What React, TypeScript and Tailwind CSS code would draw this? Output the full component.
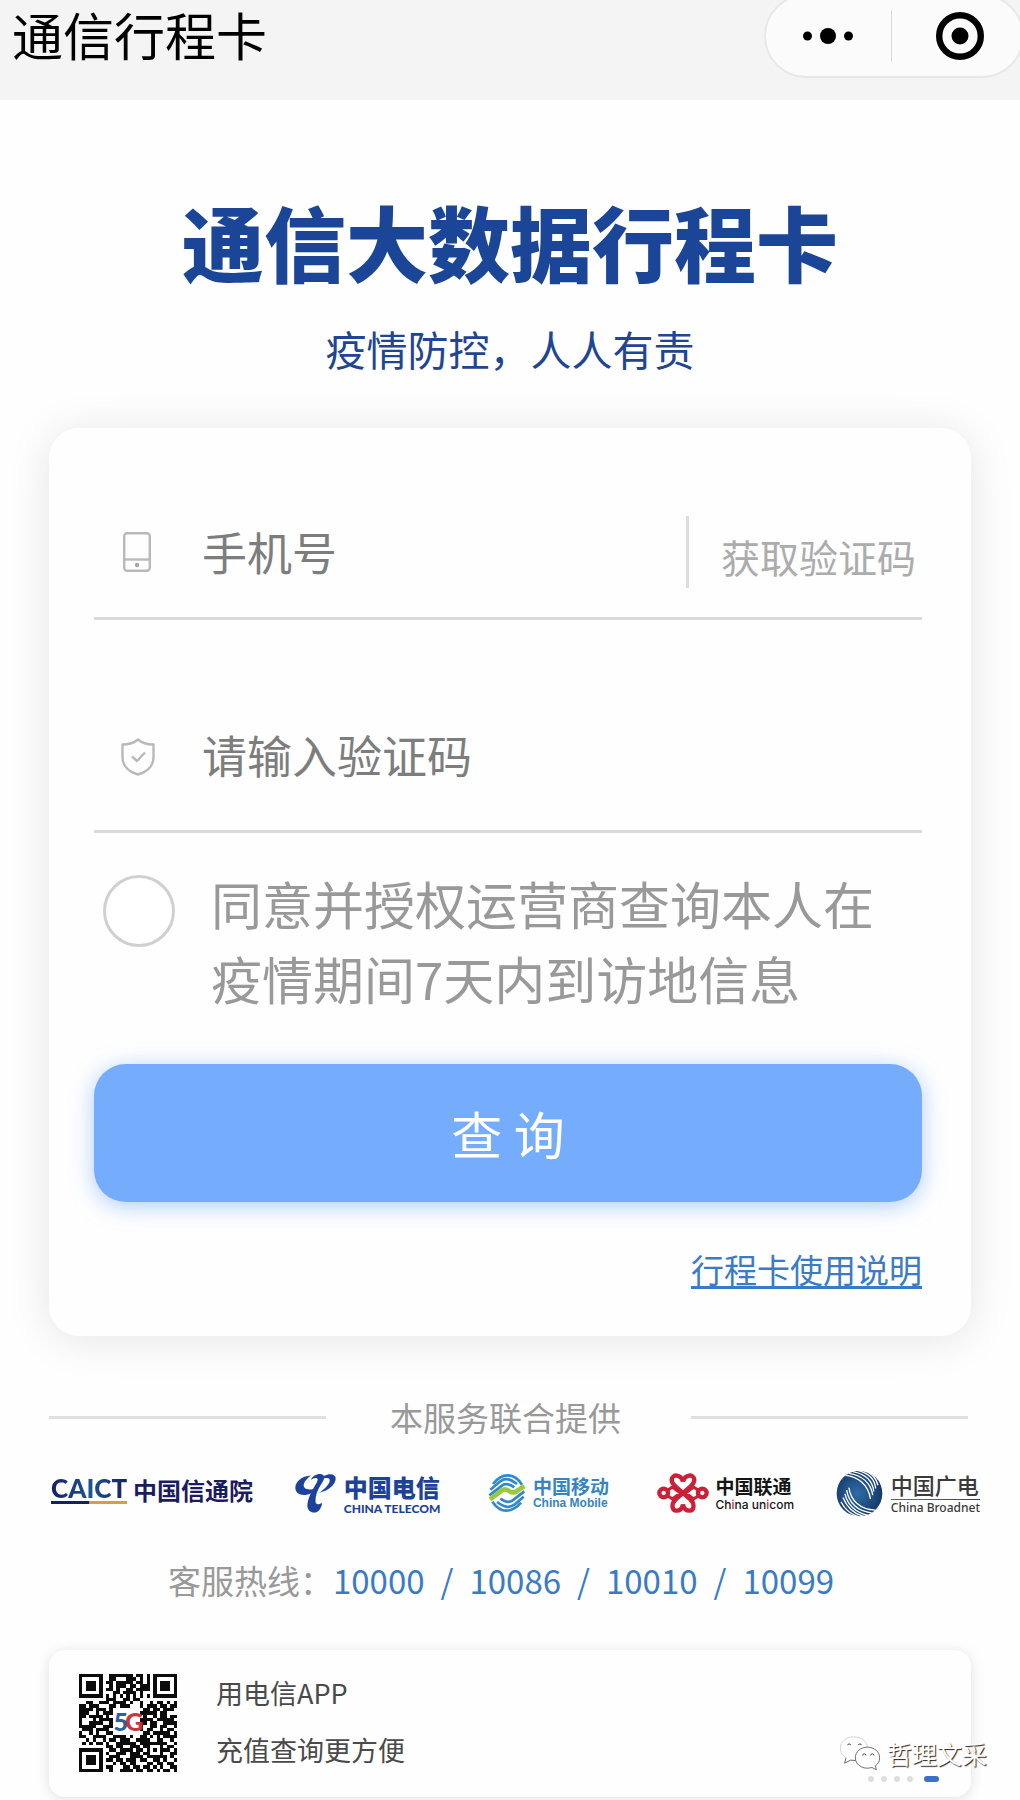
import { useState } from 'react';

const QR_ROWS = [
    '11111110011111110110101111111',
    '10000010011000111010101000001',
    '10111010110111110110101011101',
    '10111010010111011011101011101',
    '10111010110100110111101011101',
    '10000010001101111010001000001',
    '11111110101010101010101111111',
    '00000000111001101100000000000',
    '00110011101111010010010110101',
    '11011100011011100010111011011',
    '11110111010000000001101101110',
    '11100101110000000011111011000',
    '11011110100000000001001011011',
    '10001011110000000011110111110',
    '10011110010000000011011001111',
    '11111001110000000010011011001',
    '01110111100000000010110010110',
    '10010100110000000001101111101',
    '11001111001111010011010101111',
    '00101001011011100111100110010',
    '01010110100111111011111111001',
    '00000000110110011101100010110',
    '11111110011011110110101011101',
    '10000010100111011101100010011',
    '10111010011100011110111111010',
    '10111010110110111011001101001',
    '10111010001011011000110110110',
    '10000010110001101101101010011',
    '11111110010011110110110101101',
];

const HOTLINES = ['10000', '10086', '10010', '10099'];

const QrCode = () => (
    <svg viewBox="0 0 29 29" className="size-[98px] shrink-0" shapeRendering="crispEdges" role="img" aria-label="电信APP二维码">
        {QR_ROWS.map((row, y) =>
            row.split('').map((cell, x) => (cell === '1' ? <rect key={`${x}-${y}`} x={x} y={y} width="1" height="1" fill="#0b0b0b" /> : null)),
        )}
        <g fontFamily="Lato, sans-serif" fontWeight="900" fontSize="7.500">
            <text x="10.200" y="17" fill="#27629f">5</text>
            <text x="13.600" y="17" fill="#c8343f">G</text>
        </g>
    </svg>
);

const PhoneIcon = () => (
    <svg viewBox="0 0 28 40" className="h-10 w-7" fill="none" stroke="#b9b9b9" strokeWidth="2.400">
        <rect x="1.200" y="1.200" width="25.600" height="37.600" rx="3" />
        <path d="M1 27.500H27" />
        <circle cx="14" cy="33" r="2.200" fill="#a5a5a5" stroke="none" />
    </svg>
);

const ShieldIcon = () => (
    <svg viewBox="0 0 34 38" className="h-[38px] w-[34px]" fill="none" stroke="#b9b9b9" strokeWidth="2.400" strokeLinejoin="round">
        <path d="M17 1.500C13 5 7 6.500 1.500 6.500V19C1.500 28 8 34 17 36.500C26 34 32.500 28 32.500 19V6.500C27 6.500 21 5 17 1.500Z" />
        <path d="M11 18.500L16 23L24 14.500" />
    </svg>
);

const TelecomMark = () => (
    <svg viewBox="0 0 124 120" className="h-10 w-[41px]">
        <g fill="#1d429a">
            <path d="M48 7C20 8 0 27 1 45C2 62 17 68 36 65C50 62 60 54 66 43C55 50 38 52 30 45C21 36 29 22 48 7Z" />
            <path d="M48 20C54 8 66 1 80 3C92 5 90 18 80 32C68 50 61 68 62 86C63 95 68 97 82 90C80 106 71 119 59 119C42 119 35 106 38 90C42 67 57 44 66 28C71 19 68 14 62 15C56 16 52 18 48 20Z" />
            <path d="M88 8C104 0 122 2 123 15C124 33 104 53 72 60C89 49 105 33 105 22C105 15 98 13 88 16Z" />
        </g>
    </svg>
);

const MobileMark = () => (
    <svg viewBox="0 0 112 114" className="size-[38px]" fill="none" strokeWidth="8" strokeLinejoin="round">
        <g stroke="#3089cb">
            <path d="M14 30C28 12 44 4 58 4C75 4 90 15 101 32" />
            <path d="M6 47L36 22C52 10 66 16 86 30" />
            <path d="M3 64L42 34C54 26 64 30 78 40" />
            <path d="M108 52L72 80C60 88 50 84 36 74" />
            <path d="M106 68L78 92C60 104 46 98 26 84" />
            <path d="M98 86C84 102 72 110 54 110C40 110 24 100 12 83" />
        </g>
        <path d="M5 76L40 50C48 44 56 46 62 51C70 57 76 58 86 51L108 36" stroke="#9bc93c" strokeWidth="14" />
    </svg>
);

const UnicomMark = () => (
    <svg viewBox="0 0 156 120" className="h-10 w-[52px]" fill="none" stroke="#cc1f38" strokeWidth="13">
        <circle cx="20" cy="60" r="13" />
        <circle cx="136" cy="60" r="13" />
        <path d="M78 26C72 3 46 2 44 20C44 30 49 35 56 41L100 79C114 92 112 113 98 113C87 113 80 106 78 94" />
        <path d="M78 26C84 3 110 2 112 20C112 30 107 35 100 41L56 79C42 92 44 113 58 113C69 113 76 106 78 94" />
        <path d="M32 52L46 42L70 60L46 78L32 68M124 52L110 42L86 60L110 78L124 68" strokeWidth="9" />
    </svg>
);

const BroadnetMark = () => (
    <svg viewBox="0 0 140 142" className="size-[47px]">
        <defs>
            <radialGradient id="globe" cx="0.45" cy="0.5" r="0.6">
                <stop offset="0" stopColor="#2f6da8" />
                <stop offset="1" stopColor="#143464" />
            </radialGradient>
        </defs>
        <circle cx="70" cy="71" r="69" fill="url(#globe)" />
        <g fill="none" stroke="#ffffff" strokeWidth="4">
            <path d="M28 16C64 20 96 42 103 87" />
            <path d="M38 10C76 16 104 38 110 76" />
            <path d="M50 5C86 12 110 32 113 65" />
            <path d="M63 1C94 8 116 26 119 56" />
            <path d="M78 0C102 6 120 22 126 46" />
            <path d="M38 53C43 90 70 120 118 121" />
            <path d="M31 61C38 98 62 124 107 130" />
            <path d="M26 72C34 106 58 128 96 137" />
            <path d="M20 83C32 114 52 132 84 141" />
            <path d="M14 96C26 120 44 134 68 142" />
        </g>
    </svg>
);

const WatermarkIcon = () => (
    <svg viewBox="0 0 120 104" className="h-[35px] w-10" fill="#ffffff" stroke="#555555" strokeWidth="2.500">
        <path d="M41 2C18 2 1 17 1 36C1 48 8 58 18 65L14 81L31 72C36 73 41 74 47 73C66 72 83 55 83 37C83 17 64 2 41 2Z" stroke="#cccccc" />
        <path d="M18 65L14 81L31 72L46 73" />
        <path d="M82 33C61 33 46 47 46 65C46 83 62 96 82 96C87 96 92 95 96 94L109 101L106 89C114 84 119 75 119 65C119 47 103 33 82 33Z" />
        <g fill="none" stroke="#444444" strokeWidth="3">
            <path d="M22 27A6 6 0 0 1 33 27M54 27A6 6 0 0 1 65 27M68 58A5 5 0 0 1 78 58M92 58A5 5 0 0 1 102 58" />
        </g>
    </svg>
);

const Header = () => (
    <header className="flex h-[100px] items-start justify-between overflow-hidden bg-[#f4f4f4] pl-3">
        <span className="text-[51px] leading-[68px] text-black">通信行程卡</span>
        <div className="-mt-1.5 -mr-1 flex h-[84px] w-[260px] shrink-0 items-center rounded-full border-2 border-[#e8e8e8] bg-[#fbfbfb]">
            <button type="button" aria-label="更多" className="flex h-full flex-1 items-center justify-center">
                <svg viewBox="0 0 50 16" className="h-4 w-[50px]">
                    <circle cx="4.500" cy="8" r="4.500" />
                    <circle cx="25" cy="8" r="8" />
                    <circle cx="45.500" cy="8" r="4.500" />
                </svg>
            </button>
            <div className="h-[52px] w-px bg-[#d8d8d8]" />
            <button type="button" aria-label="关闭" className="flex h-full flex-1 items-center justify-center pl-1.5">
                <svg viewBox="0 0 48 48" className="size-12">
                    <circle cx="24" cy="24" r="20.800" fill="none" stroke="#000000" strokeWidth="6.400" />
                    <circle cx="24" cy="24" r="8.500" />
                </svg>
            </button>
        </div>
    </header>
);

const QueryForm = () => {
    const [agreed, setAgreed] = useState(false);

    return (
        <form
            onSubmit={(e) => e.preventDefault()}
            className="mx-[49px] mt-[50px] flex flex-col rounded-[30px] bg-[#fefefe] pt-[58px] pr-[49px] pb-[42px] pl-[45px] shadow-[0_4px_44px_rgba(0,0,0,0.1)]"
        >
            <div className="flex h-[134px] items-center border-b-3 border-[#dadada]">
                <div className="flex w-[108px] shrink-0 justify-center pr-[22px]">
                    <PhoneIcon />
                </div>
                <input
                    type="tel"
                    aria-label="手机号"
                    placeholder="手机号"
                    className="h-[72px] min-w-0 flex-1 text-[45px] outline-none placeholder:text-[#7d7d7d]"
                />
                <div className="h-[72px] w-[3px] bg-[#dcdcdc]" />
                <button type="button" className="pt-2 pr-1.5 pl-8 text-[39px] leading-[60px] text-[#acacac]">
                    获取验证码
                </button>
            </div>

            <div className="mt-16 flex h-[149px] items-center border-b-3 border-[#dadada]">
                <div className="flex w-[108px] shrink-0 justify-center pr-5">
                    <ShieldIcon />
                </div>
                <input
                    type="text"
                    aria-label="验证码"
                    placeholder="请输入验证码"
                    className="mb-1.5 h-[72px] min-w-0 flex-1 text-[45px] outline-none placeholder:text-[#7d7d7d]"
                />
            </div>

            <div className="mt-[33px] flex items-start pl-[9px]">
                <input
                    id="agree"
                    type="checkbox"
                    checked={agreed}
                    onChange={(e) => setAgreed(e.target.checked)}
                    className="mt-[9px] size-[72px] shrink-0 appearance-none rounded-full border-3 border-[#d0d0d0] bg-white checked:border-[#76acfc] checked:bg-[#76acfc]"
                />
                <label htmlFor="agree" className="pr-8 pl-9 text-[51px] leading-[75px] text-[#999999]">
                    同意并授权运营商查询本人在疫情期间7天内到访地信息
                </label>
            </div>

            <button
                type="submit"
                className="mt-12 h-[138px] rounded-[32px] bg-[#76acfc] text-[51px] text-white shadow-[0_4px_22px_rgba(118,172,252,0.6)]"
            >
                查 询
            </button>

            <a href="#guide" className="mt-[42px] self-end text-[33px] leading-[50px] text-[#3a7bc8] underline decoration-3 underline-offset-3">
                行程卡使用说明
            </a>
        </form>
    );
};

const Partners = () => (
    <div className="mt-[26px] flex h-[50px] items-center justify-between pr-10 pl-[51px] leading-none font-bold whitespace-nowrap">
        <div className="flex items-center gap-1.5 pb-1.5 text-[#1b1c5e]">
            <div className="flex flex-col gap-px">
                <span className="bg-linear-to-r from-[#15205f] via-[#1d5596] to-[#15205f] bg-clip-text font-[Lato,sans-serif] text-[26px] leading-6 font-black text-transparent">
                    CAICT
                </span>
                <span className="h-[3px] bg-linear-to-r from-[#15205f] from-50% to-[#dd9b45] to-50%" />
            </div>
            <span className="text-[24px]">中国信通院</span>
        </div>

        <div className="flex items-center gap-2 text-[#1d429a]">
            <TelecomMark />
            <div className="flex flex-col">
                <span className="text-[24px] leading-8 font-black">中国电信</span>
                <span className="font-[Lato,sans-serif] text-[12px] leading-3 font-black">CHINA TELECOM</span>
            </div>
        </div>

        <div className="ml-1.5 flex items-center gap-[7px] text-[#3585c5]">
            <MobileMark />
            <div className="flex flex-col">
                <span className="text-[19px] leading-5">中国移动</span>
                <span className="font-['Liberation_Sans',sans-serif] text-[12px] leading-[14px]">China Mobile</span>
            </div>
        </div>

        <div className="ml-1.5 flex items-center gap-[7px] text-[#151515]">
            <UnicomMark />
            <div className="flex flex-col">
                <span className="text-[19px] leading-6">中国联通</span>
                <span className="font-[Inter,sans-serif] text-[12px] leading-[14px] font-medium">
                    Ch<span className="text-[#cc1f38]">i</span>na un<span className="text-[#cc1f38]">i</span>com
                </span>
            </div>
        </div>

        <div className="flex items-center gap-2 text-[#3a3a3a]">
            <BroadnetMark />
            <div className="flex flex-col">
                <span className="text-[22px] leading-[26px] font-medium">中国广电</span>
                <span className="mt-0.5 h-px bg-linear-to-r from-[#c8343f] to-[#1c3f78]" />
                <span className="pt-px font-['Noto_Sans',sans-serif] text-[12px] leading-[14px] font-medium">China Broadnet</span>
            </div>
        </div>
    </div>
);

const Promo = () => (
    <section className="relative mx-[49px] mt-[45px] flex items-center rounded-2xl bg-[#fefefe] pt-3.5 pr-8 pb-[15px] pl-[30px] shadow-[0_2px_14px_rgba(0,0,0,0.12)]">
        <QrCode />
        <p className="pb-1 pl-[39px] text-[27px] leading-[57px] text-[#4a4a4a]">
            用电信APP
            <br />
            充值查询更方便
        </p>
        <div className="absolute right-8 bottom-[15px] flex items-center gap-[7px]">
            {[0, 1, 2, 3].map((i) => (
                <span key={i} className="size-1.5 rounded-full bg-[#dedede]" />
            ))}
            <span className="ml-1 h-1.5 w-[15px] rounded-full bg-[#3b70c6]" />
        </div>
        <div className="absolute -right-4 bottom-[26px] flex items-center gap-[7px]">
            <WatermarkIcon />
            <span className="text-[25px] leading-9 text-white [text-shadow:1px_1px_1px_#222222]">哲理文采</span>
        </div>
    </section>
);

export default function App() {
    return (
        <div className="overflow-hidden bg-[#fefefe] pb-[3px] font-['Noto_Sans_CJK_SC',sans-serif]">
            <Header />
            <main>
                <h1 className="mt-[91px] text-center text-[82px] leading-[100px] font-black text-[#1b4596]">通信大数据行程卡</h1>
                <p className="mt-[27px] text-center text-[41px] leading-[60px] text-[#1f4690]">疫情防控，人人有责</p>

                <QueryForm />

                <div className="mr-[52px] ml-[49px] mt-14 flex items-center text-[33px] leading-[50px] text-[#999999]">
                    <span className="h-[3px] flex-1 bg-[#e0e0e0]" />
                    <span className="pr-[70px] pl-16">本服务联合提供</span>
                    <span className="h-[3px] flex-1 bg-[#e0e0e0]" />
                </div>

                <Partners />

                <p className="mt-[37px] pr-[18px] text-center text-[33px] leading-[50px] text-[#999999]">
                    客服热线：
                    {HOTLINES.map((phone, i) => (
                        <span key={phone} className="text-[#3a7bc8]">
                            {i > 0 && <span className="mx-4">/</span>}
                            <a href={`tel:${phone}`}>{phone}</a>
                        </span>
                    ))}
                </p>

                <Promo />
            </main>
        </div>
    );
}
